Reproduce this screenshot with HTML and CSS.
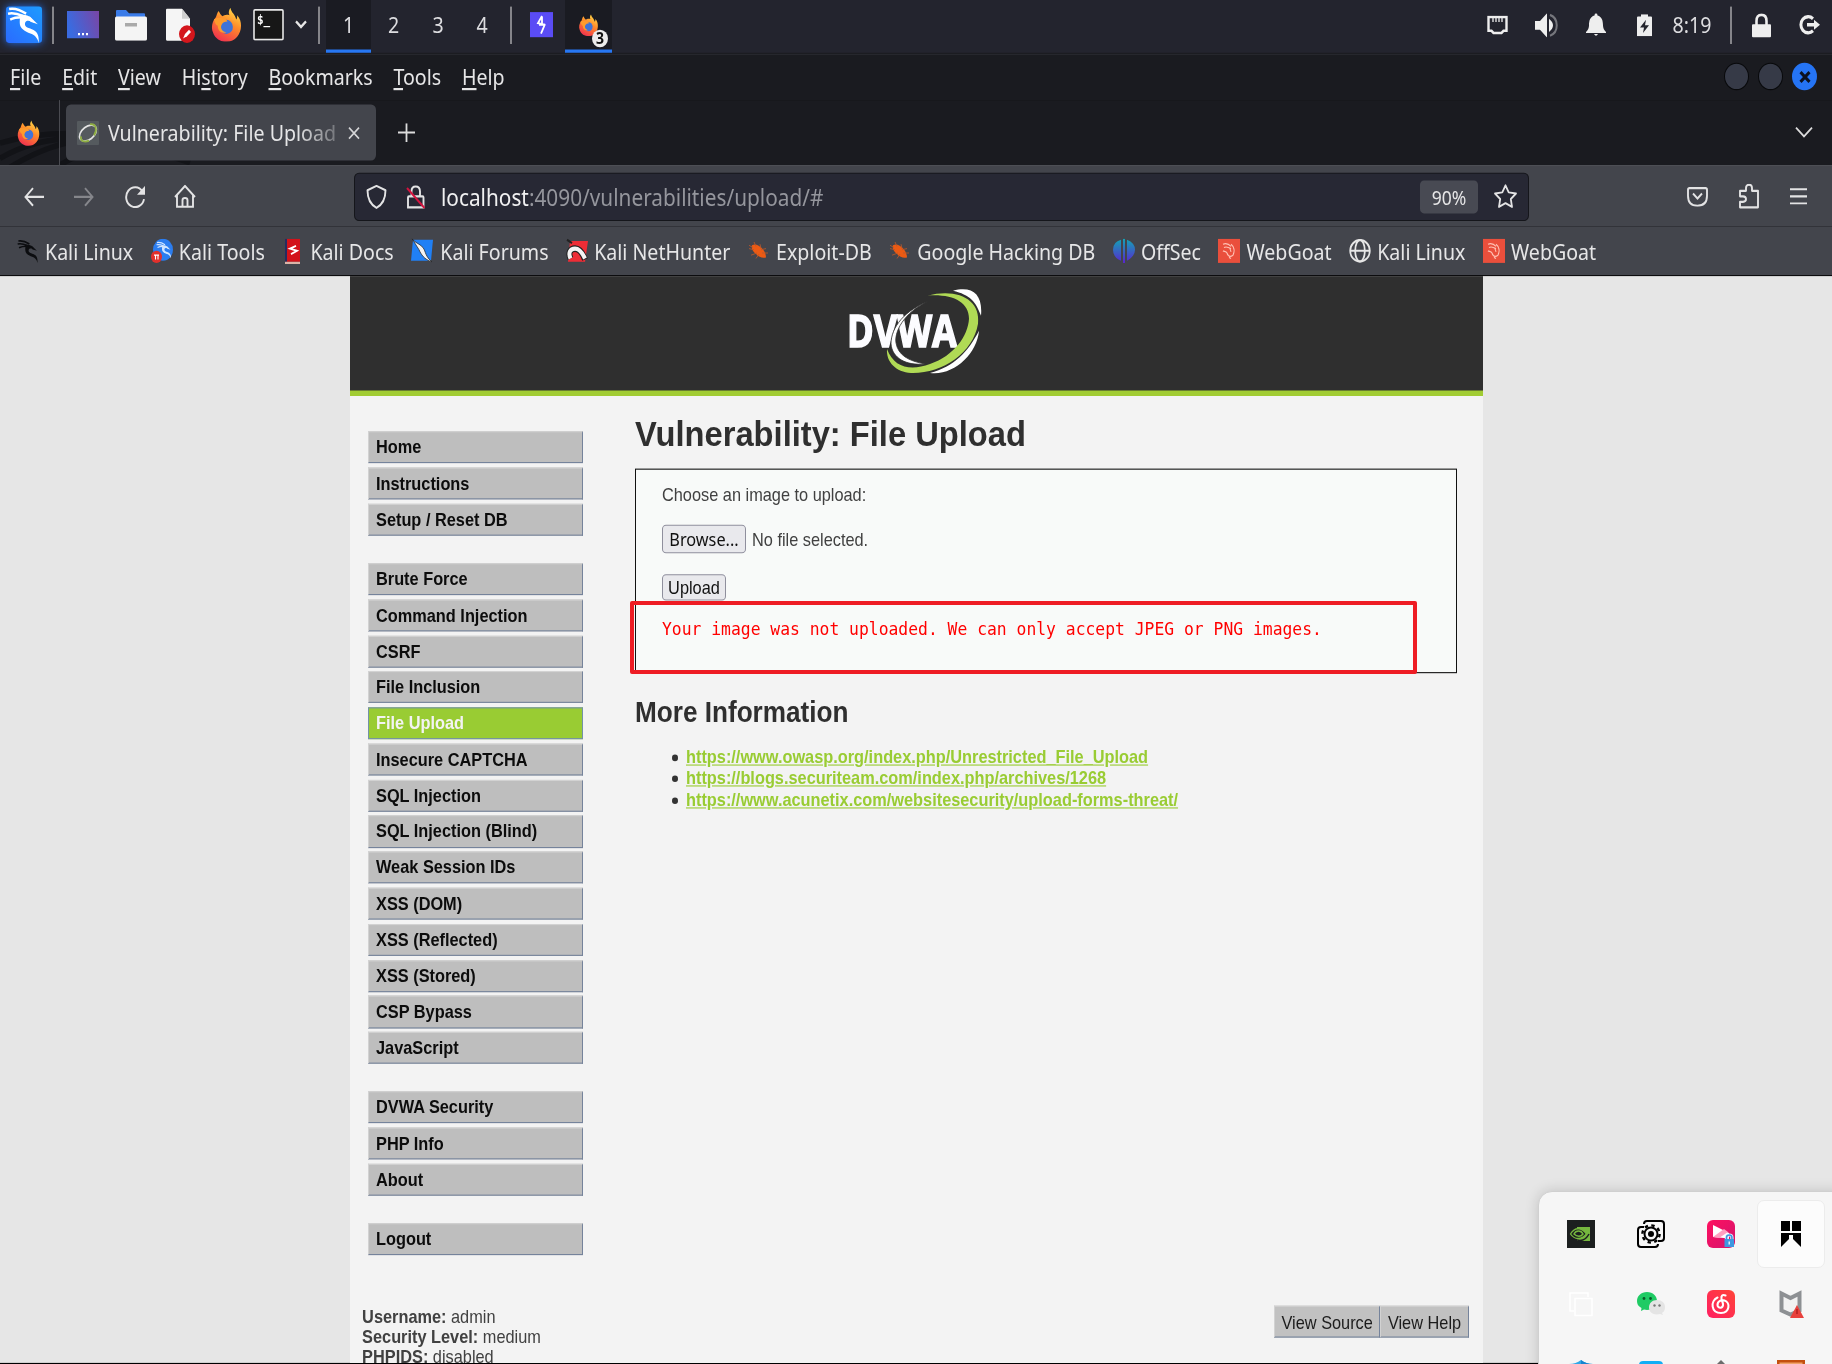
FILE: index.html
```html
<!DOCTYPE html>
<html lang="en">
<head>
<meta charset="utf-8">
<title>Vulnerability: File Upload</title>
<link rel="stylesheet" href="styles.css">
</head>
<body>
<svg class="defs" width="0" height="0" aria-hidden="true">
  <defs>
    <linearGradient id="gFox" x1="0.8" y1="0" x2="0.3" y2="1"><stop offset="0" stop-color="#ffe14a"/><stop offset=".45" stop-color="#ff8a2a"/><stop offset="1" stop-color="#f0304f"/></linearGradient>
    <linearGradient id="gDesk" x1="0" y1="0.3" x2="1" y2="0"><stop offset="0" stop-color="#3a6be0"/><stop offset="1" stop-color="#7a45a5"/></linearGradient>
    <linearGradient id="gKali" x1="1" y1="0" x2="0" y2="1"><stop offset="0" stop-color="#1d9bff"/><stop offset="1" stop-color="#2a6bff"/></linearGradient>
    <linearGradient id="gOff" x1="0" y1="0" x2="0" y2="1"><stop offset="0" stop-color="#12a5b4"/><stop offset="1" stop-color="#5a25cf"/></linearGradient>
    <linearGradient id="gPink" x1="0" y1="0" x2="1" y2="1"><stop offset="0" stop-color="#ff1060"/><stop offset="1" stop-color="#d3156d"/></linearGradient>
    <linearGradient id="gMusic" x1="1" y1="0" x2="0" y2="1"><stop offset="0" stop-color="#ff4438"/><stop offset="1" stop-color="#ff1f62"/></linearGradient>
    <symbol id="fox" viewBox="0 0 32 32">
      <path d="M20 0c-2 3-2 5-1 7-3-1-6 0-7 1-2-1-3-3-4-5-2 2-2 4-3 6C1 13 0 19 2 23c2 6 8 9 14 9 9 0 15-7 15-15 0-4-1-7-4-10 0 2 0 3-1 4-1-5-5-6-6-11z" fill="url(#gFox)"/>
      <circle cx="16" cy="18" r="6.6" fill="#3f73d8"/>
      <path d="M3 11c3-2 6-2 9-1 2 0 4 1 5 3-3 0-5 1-6 3-2 3 1 7 5 7-6 2-9-2-9-6-2-1-3-3-4-6z" fill="#ff9b2c"/>
    </symbol>
    <symbol id="dragon" viewBox="0 0 32 32">
      <path d="M2 3c6-1 11 1 16 4M1 7c5-1 9 0 14 2M3 12c4-2 7-2 11-2" fill="none" stroke="currentColor" stroke-width="2.2"/>
      <path d="M13 8c7-1 11 3 13 7-4-2-8-3-9 0-1 4 4 4 8 6 4 2 5 5 5 11-2-5-4-7-8-8-5-2-10-4-10-9 0-2 0-5 1-7z" fill="currentColor"/>
      <path d="M21 9l8 7-7-2z" fill="currentColor"/>
    </symbol>
    <symbol id="bug" viewBox="0 0 22 22">
      <path d="M4 6c3-2 7 0 9 2 3 2 5 6 5 9-3 1-7 0-10-3C5 12 3 9 4 6z" fill="#ec5a13"/>
      <path d="M1 9l5 1M6 3l2 4M3 15l6-2M8 18l3-4M12 5l1 4M18 9l-5 1M20 13l-6 0M1 6l4 2" stroke="#b9582b" stroke-width=".8" fill="none"/>
    </symbol>
    <symbol id="goat" viewBox="0 0 22 22">
      <rect width="22" height="22" fill="#ea4f3c"/>
      <path d="M5 5c3-1 6 0 8 2M6 8c2-1 5 0 7 1M13 5c3 2 4 6 2 10M5 11c1 1 3 0 4 2M9 13c1 3 3 4 6 2M11 17l2 1M12 9l1 3" fill="none" stroke="#ffc1b4" stroke-width="1.1"/>
    </symbol>
  </defs>
</svg>

<div class="screen">
  <header class="panel">
    <div class="panel-left">
      <div class="cell"><svg class="kali" width="38" height="36" viewBox="0 0 38 36"><rect x="1" y="1" width="36" height="33" rx="3" fill="url(#gKali)"/><svg x="1" y="0" width="36" height="34"><use href="#dragon" color="#fff"/></svg></svg></div>
      <div class="cell"><i class="sep"></i></div>
      <div class="cell"><svg width="32" height="25" viewBox="0 0 32 25"><rect width="32" height="25" fill="url(#gDesk)"/><path d="M11 21h2M15 21h2M19 21h2" stroke="#fff" stroke-width="2"/></svg></div>
      <div class="cell"><svg width="32" height="29" viewBox="0 0 32 29"><path d="M1 9V2q0-1 1-1h9l3 3h15q1 0 1 1v5z" fill="#3a7be8"/><rect y="7" width="32" height="22" rx="1.5" fill="#f4f4f4"/><path d="M10 13h12v3H10z" fill="#a9a9a9"/></svg></div>
      <div class="cell"><svg width="31" height="32" viewBox="0 0 31 32"><path d="M1 2q0-1 1-1h15l8 9v20H2q-1 0-1-1z" fill="#f5f5f5"/><path d="M17 1l8 9h-8z" fill="#cfcfcf"/><circle cx="22" cy="24" r="8" fill="#d4161c"/><path d="M18 28l2-4 4-4 2 2-4 4z" fill="#fff"/></svg></div>
      <div class="cell"><svg width="31" height="31"><use href="#fox"/></svg></div>
      <div class="cell"><svg width="31" height="29" viewBox="0 0 31 29"><rect x="1" y="1" width="29" height="27" rx="1" fill="#171717" stroke="#e8e8e8" stroke-width="1.6"/><text x="4" y="14" class="prompt">$_</text></svg></div>
      <div class="cell"><svg width="12" height="9" viewBox="0 0 12 9"><path d="M1 1.5l5 5 5-5" fill="none" stroke="#e6e6e6" stroke-width="2.2"/></svg></div>
      <div class="cell"><i class="sep"></i></div>
      <div class="cell active">1</div>
      <div class="cell">2</div>
      <div class="cell">3</div>
      <div class="cell">4</div>
      <div class="cell"><i class="sep"></i></div>
      <div class="cell"><svg width="23" height="23" viewBox="0 0 23 23"><rect width="23" height="23" fill="#5a4cf5"/><path d="M12 3.500l-4 6.500 7 1.500-6 0M15 11l-4 8.500M12 4v7" fill="none" stroke="#fff" stroke-width="1.800"/></svg></div>
      <div class="cell active"><svg class="fox-small" width="21" height="20"><use href="#fox"/></svg><span class="badge">3</span></div>
    </div>
    <div class="panel-right">
      <div class="cell"><svg width="21" height="18" viewBox="0 0 21 18"><path d="M1.500 1.500h18v12.500h-3l-2 2h-8l-2-2h-3z" fill="none" stroke="#eee" stroke-width="2.400"/><path d="M6 2v4M9 2v4M12 2v4M15 2v4" stroke="#eee" stroke-width="1.300"/></svg></div>
      <div class="cell"><svg width="25" height="22" viewBox="0 0 25 22"><path d="M0 7h5l7-7v22l-7-7H0z" fill="#eee"/><path d="M14 5q8 6 0 12z" fill="#eee"/><path d="M15 1.500c9 3 9 16 0 19" fill="none" stroke="#75767c" stroke-width="2"/></svg></div>
      <div class="cell"><svg width="20" height="21" viewBox="0 0 20 21"><path d="M10 0q1.500 0 1.500 2C16 3 17 7 17 11q0 4 3 6v1H0v-1q3-2 3-6c0-4 1-8 5.500-9Q8.500 0 10 0zM8 19h4q-2 3-4 0z" fill="#eee"/></svg></div>
      <div class="cell"><svg width="15" height="20" viewBox="0 0 15 20"><path d="M4 0h7v2h3q1 0 1 1v17H0V3q0-1 1-1h3z" fill="#eee"/><path d="M9 5l-6 7h4l-1 5 6-7H8z" fill="#23242d"/></svg></div>
      <div class="cell">8:19</div>
      <div class="cell"><i class="sep"></i></div>
      <div class="cell"><svg width="19" height="22" viewBox="0 0 19 22"><rect y="10" width="19" height="12" rx="1" fill="#eee"/><path d="M4.500 11V7q0-5.500 5-5.500t5 5.500v4" fill="none" stroke="#eee" stroke-width="2.600"/></svg></div>
      <div class="cell"><svg width="21" height="19" viewBox="0 0 21 19"><path d="M14 4A7.300 7.300 0 1 0 14 15" fill="none" stroke="#eee" stroke-width="3"/><path d="M8 8h7V5l6 4.500-6 4.500v-3H8z" fill="#eee"/></svg></div>
    </div>
  </header>

  <div class="titlebar">
    <nav class="menus">
      <span><u>F</u>ile</span><span><u>E</u>dit</span><span><u>V</u>iew</span><span>Hi<u>s</u>tory</span><span><u>B</u>ookmarks</span><span><u>T</u>ools</span><span><u>H</u>elp</span>
    </nav>
    <div class="window-buttons"><i></i><i></i><b><svg width="12" height="12" viewBox="0 0 12 12"><path d="M1.500 1.500l9 9M10.500 1.500l-9 9" stroke="#0c1220" stroke-width="3"/></svg></b></div>
  </div>

  <div class="tabs">
    <svg class="swirl" width="210" height="48" viewBox="0 0 210 48"><path d="M0 28Q60 12 140 26M0 42Q60 10 150 34M10 50Q60 22 110 24M60 48Q110 20 190 46" fill="none" stroke="#121317" stroke-width="5"/></svg>
    <div class="tab-home"><svg width="23" height="24"><use href="#fox"/></svg></div>
    <div class="tab">
      <svg width="22" height="22" viewBox="0 0 22 22"><rect width="22" height="22" rx="1" fill="#555a5e"/><ellipse cx="11" cy="11" rx="9.500" ry="6" transform="rotate(-35 11 11)" fill="none" stroke="#e4e4e4" stroke-width="1.600"/><path d="M13 3c7-1 7 6 4 10M4 14c-1 5 4 5 8 4" fill="none" stroke="#8fae43" stroke-width="1.800"/></svg>
      <span class="tab-title">Vulnerability: File Upload</span>
      <svg width="12" height="12" viewBox="0 0 12 12"><path d="M1 1l10 10M11 1L1 11" stroke="#d5d5d7" stroke-width="1.600"/></svg>
    </div>
    <svg class="plus" width="17" height="17" viewBox="0 0 17 17"><path d="M8.500 0v17M0 8.500h17" stroke="#dcdcdc" stroke-width="1.800"/></svg>
    <svg class="tab-list" width="18" height="11" viewBox="0 0 18 11"><path d="M1 1l8 8 8-8" fill="none" stroke="#dcdcdc" stroke-width="1.800"/></svg>
  </div>

  <div class="toolbar">
    <div class="nav-buttons">
      <svg width="20" height="18" viewBox="0 0 20 18"><path d="M20 9H1.500M9 1L1.500 9 9 17" fill="none" stroke="#e3e3e4" stroke-width="1.900"/></svg>
      <svg width="20" height="18" viewBox="0 0 20 18"><path d="M0 9h18.500M11 1l7.500 8L11 17" fill="none" stroke="#85868b" stroke-width="1.900"/></svg>
      <svg width="22" height="20" viewBox="0 0 22 20"><path d="M18.500 5A9 9 0 1 0 20 12" fill="none" stroke="#e3e3e4" stroke-width="1.900"/><path d="M21 0v8h-8z" fill="#e3e3e4"/></svg>
      <svg width="22" height="21" viewBox="0 0 22 21"><path d="M1 11l10-10 10 10M3 9.500V20h16V9.500M8.500 20v-6q0-2 2.500-2t2.500 2v6" fill="none" stroke="#e3e3e4" stroke-width="1.900"/></svg>
    </div>
    <div class="urlbar">
      <svg class="shield" width="21" height="22" viewBox="0 0 21 22"><path d="M10.500 1l9 4c0 8-3 13-9 16-6-3-9-8-9-16z" fill="none" stroke="#e3e3e4" stroke-width="1.900" stroke-linejoin="round"/></svg>
      <svg class="lock" width="20" height="22" viewBox="0 0 20 22"><path d="M2 20.500v-9q0-1 1-1h13.500q1 0 1 1v9zM5.500 10V6q0-4.500 4.200-4.500T14 6v4" fill="none" stroke="#e3e3e4" stroke-width="1.900"/><path d="M1 3l17.500 18" stroke="#d3143f" stroke-width="2"/></svg>
      <span class="url"><b>localhost</b>:4090/vulnerabilities/upload/#</span>
      <span class="zoom-level">90%</span>
      <svg width="25" height="23" viewBox="0 0 25 23"><path d="M12.500 1.500l3.200 6.400 7.300 1-5.200 5 1.200 7.200-6.500-3.400L6 21.100l1.200-7.200L2 8.900l7.300-1z" fill="none" stroke="#e3e3e4" stroke-width="1.800" stroke-linejoin="round"/></svg>
    </div>
    <div class="tool-buttons">
      <svg width="21" height="18" viewBox="0 0 21 18"><path d="M2.500 1h16q1.500 0 1.500 1.500V8q0 9-9.500 9T1 8V2.500Q1 1 2.500 1z" fill="none" stroke="#e3e3e4" stroke-width="1.900"/><path d="M6 6l4.500 4.500L15 6" fill="none" stroke="#e3e3e4" stroke-width="1.900"/></svg>
      <svg width="20" height="23" viewBox="0 0 20 23"><path d="M1 6.500h6V4q0-3 3-3t3 3v2.500h6V21.500H1v-5h3q3 0 3-2.500T4 11.500H1z" fill="none" stroke="#e3e3e4" stroke-width="1.900" stroke-linejoin="round"/></svg>
      <svg width="17" height="15" viewBox="0 0 17 15"><path d="M0 1h17M0 7.500h17M0 14h17" stroke="#e3e3e4" stroke-width="1.900"/></svg>
    </div>
  </div>

  <nav class="bookmarks">
    <span><svg width="22" height="24"><use href="#dragon" color="#0c0d10"/></svg>Kali Linux</span>
    <span><svg width="22" height="22" viewBox="0 0 22 22"><circle cx="12" cy="10" r="10" fill="#2b7df0"/><svg x="5" y="2" width="16" height="16"><use href="#dragon" color="#cfe4ff"/></svg><circle cx="5.500" cy="16.500" r="5.500" fill="#e1302c"/><path d="M3 15h5M4.500 15v4M7 15v4" stroke="#fff" stroke-width="1.100"/></svg>Kali Tools</span>
    <span><svg width="22" height="23" viewBox="0 0 22 23"><path d="M3 0h15v21H3z" fill="#d3121a"/><path d="M3 0h2v21H3z" fill="#262c60"/><path d="M3 21h15v2H3z" fill="#d9b4a8"/><path d="M14 6.500l-6 2.500 7 2-6 3" fill="none" stroke="#fff" stroke-width="1.700"/></svg>Kali Docs</span>
    <span><svg width="23" height="22" viewBox="0 0 23 22"><path d="M2 1h20l-2 19H0z" fill="#2080f5"/><path d="M1 0c3 4 7 4 11 8 3 4 2 8 9 13-8-2-11-7-13-11z" fill="#f3f3f3" stroke="#222" stroke-width=".7"/></svg>Kali Forums</span>
    <span><svg width="22" height="22" viewBox="0 0 22 22"><path d="M4 2h18l-3 19H2z" fill="#ee2d36"/><path d="M4.500 18C2 13 4 9 9 9s8 5 10 10" fill="none" stroke="#222" stroke-width="6"/><path d="M4.500 18C2 13 4 9 9 9s8 5 10 9" fill="none" stroke="#f4f4f4" stroke-width="4"/><path d="M1 1l5 3" stroke="#222" stroke-width="2"/></svg>Kali NetHunter</span>
    <span><svg width="22" height="22"><use href="#bug"/></svg>Exploit-DB</span>
    <span><svg width="22" height="22"><use href="#bug"/></svg>Google Hacking DB</span>
    <span><svg width="22" height="22" viewBox="0 0 22 22"><path d="M8 1v19Q0 17 0 10T8 1zM10 0h2v22h-2zM14 1q8 3 8 9t-8 10z" fill="url(#gOff)"/></svg>OffSec</span>
    <span><svg width="22" height="22"><use href="#goat"/></svg>WebGoat</span>
    <span><svg width="22" height="22" viewBox="0 0 22 22"><g fill="none" stroke="#e6e6e6" stroke-width="1.800"><circle cx="11" cy="11" r="9.800"/><ellipse cx="11" cy="11" rx="4.800" ry="9.800"/><path d="M1 11h20"/></g></svg>Kali Linux</span>
    <span><svg width="22" height="22"><use href="#goat"/></svg>WebGoat</span>
  </nav>

  <main class="page">
    <div class="container">
      <header class="site-header">
        <svg width="140" height="84" viewBox="0 0 140 92" preserveAspectRatio="none">
          <text x="1" y="65" class="logo-text" textLength="110" lengthAdjust="spacingAndGlyphs">DVWA</text>
          <path d="M86 18C62 27 48 47 50 61C52 73 62 79 79 82C60 84 46 76 45 62C45 46 58 28 86 18z" fill="#fff" stroke="#2f2f2f" stroke-width=".8"/>
          <path d="M81 14C112 6 135 18 132 42C127 72 95 92 65 91C50 90 40 80 41 67C48 86 65 89 84 82C108 74 122 54 123 37C123 20 106 12 81 14z" fill="#b0da55"/>
          <path d="M107 9C126 4 137 12 135 34C130 20 124 13 107 9zM133 49C131 72 108 94 84 91C108 85 122 70 133 49z" fill="#fff"/>
        </svg>
      </header>
      <div class="site-body">
        <nav class="side">
          <ul><li>Home</li><li>Instructions</li><li>Setup / Reset DB</li></ul>
          <ul><li>Brute Force</li><li>Command Injection</li><li>CSRF</li><li>File Inclusion</li><li class="selected">File Upload</li><li>Insecure CAPTCHA</li><li>SQL Injection</li><li>SQL Injection (Blind)</li><li>Weak Session IDs</li><li>XSS (DOM)</li><li>XSS (Reflected)</li><li>XSS (Stored)</li><li>CSP Bypass</li><li>JavaScript</li></ul>
          <ul><li>DVWA Security</li><li>PHP Info</li><li>About</li></ul>
          <ul><li>Logout</li></ul>
        </nav>
        <section class="content">
          <h1>Vulnerability: File Upload</h1>
          <div class="form-box">
            <p class="label">Choose an image to upload:</p>
            <div class="file-row"><span class="button browse">Browse...</span><span>No file selected.</span></div>
            <span class="button upload">Upload</span>
            <pre>Your image was not uploaded. We can only accept JPEG or PNG images.</pre>
          </div>
          <h2>More Information</h2>
          <ul class="links">
            <li><a>https://www.owasp.org/index.php/Unrestricted_File_Upload</a></li>
            <li><a>https://blogs.securiteam.com/index.php/archives/1268</a></li>
            <li><a>https://www.acunetix.com/websitesecurity/upload-forms-threat/</a></li>
          </ul>
        </section>
      </div>
      <footer class="site-footer">
        <div><b>Username:</b> admin<br><b>Security Level:</b> medium<br><b>PHPIDS:</b> disabled</div>
        <div class="footer-buttons"><span>View Source</span><span>View Help</span></div>
      </footer>
    </div>
  </main>
</div>

<div class="highlight"></div>

<aside class="tray">
  <div><svg width="28" height="28" viewBox="0 0 28 28"><rect width="28" height="28" fill="#1c1f1f"/><path d="M10 7h13v14H10z" fill="#76b83f"/><path d="M3.500 14c4-7 11-7 16 0-5 6-12 6-16 0z" fill="#1c1f1f" stroke="#76b83f" stroke-width="1.300"/><path d="M7 14c2-4 7-4 9 0-2 3-6 3-9 0z" fill="none" stroke="#76b83f" stroke-width="1.500"/><path d="M10 20q8 2 12-6" fill="none" stroke="#1c1f1f" stroke-width="1.500"/></svg></div>
  <div><svg width="28" height="28" viewBox="0 0 28 28"><g fill="none" stroke="#000" stroke-width="2"><path d="M7 4q0-3 3-3h14q3 0 3 3v14q0 3-3 3h-3"/><path d="M7 7H4q-3 0-3 3v14q0 3 3 3h14q3 0 3-3"/><circle cx="14" cy="14" r="6.500" stroke-width="2"/><circle cx="14" cy="14" r="8.600" stroke-dasharray="3.380 3.380" stroke-width="2.400"/></g><circle cx="14" cy="14" r="3" fill="#000"/></svg></div>
  <div><svg width="28" height="28" viewBox="0 0 28 28"><rect width="28" height="28" rx="6" fill="url(#gPink)"/><path d="M6 5l16 8v6l-5-1-11-1z" fill="#fff"/><path d="M6 17l11-8 4 3-9 6z" fill="#ff9fc0"/><path d="M17.500 19h9.500v8h-9.500z" fill="#3e97e0"/><path d="M19.500 19v-1.500q0-2.500 2.700-2.500t2.700 2.500V19" fill="none" stroke="#e9f4ff" stroke-width="3.200"/><path d="M19.500 19.500v-2q0-2.500 2.700-2.500t2.700 2.500v2" fill="none" stroke="#3e97e0" stroke-width="1.600"/><path d="M22.200 21.500v3" stroke="#fff" stroke-width="1.300"/></svg></div>
  <div class="picked"><svg width="20" height="26" viewBox="0 0 20 26"><path d="M0 0h9v10H0zM11 0h9v10h-9zM0 12h20v14l-8-8V14h-4v4l-8 8z"/></svg></div>
  <div><svg width="28" height="28" viewBox="0 0 28 28"><path d="M21 7V3H3v18h4M8 8.500h17v17H8z" fill="none" stroke="#fff" stroke-width="1.500"/></svg></div>
  <div><svg width="28" height="28" viewBox="0 0 28 28"><path d="M10 2c6 0 10 4 10 9s-4 9-10 9l-3-.5L4 21l.5-3C1 16 0 14 0 11c0-5 4-9 10-9z" fill="#1fcb64"/><circle cx="7" cy="8.500" r="1.400" fill="#0b5a2a"/><circle cx="13.500" cy="8.500" r="1.400" fill="#0b5a2a"/><path d="M20 10c5 0 8 3 8 7 0 3-1 5-3 6l1 2-3-1-3 .500c-5 0-8-3-8-7s3-7.500 8-7.500z" fill="#e4e4e4"/><circle cx="17.500" cy="15.500" r="1.200" fill="#777"/><circle cx="22.500" cy="15.500" r="1.200" fill="#777"/></svg></div>
  <div><svg width="28" height="28" viewBox="0 0 28 28"><rect width="28" height="28" rx="6" fill="url(#gMusic)"/><path d="M18.500 5.500c-3-1.500-4.500.5-4 3l1.500 5.500c.5 5-5.500 4.500-5.500 1 0-4 4-5.500 7-4.500 6 2 5.500 12-3.500 12.500C4 23 3 11 10.500 7.500" fill="none" stroke="#fff" stroke-width="2.100" stroke-linecap="round"/></svg></div>
  <div><svg width="28" height="28" viewBox="0 0 28 28"><path d="M3.500 3l10 5 10-5v18l-10 5-10-5z" fill="#f2f2f2"/><path d="M4.500 3.500l9 4.500 9-4.500v17l-9 4-9-4z" fill="none" stroke="#8d9093" stroke-width="4"/><path d="M20 15l7 13H13z" fill="#e8413c"/><path d="M20 19v5" stroke="#b3201f" stroke-width="1.500"/></svg></div>
  <div><svg width="28" height="28" viewBox="0 0 28 28"><path d="M2 4q7 0 12-4 5 4 12 4v10H2z" fill="#2fa8e8"/><path d="M14 0q5 4 12 4v10H14z" fill="#1784cf"/></svg></div>
  <div><svg width="28" height="28" viewBox="0 0 28 28"><rect x="2" y="1" width="24" height="24" rx="4" fill="#12aef5"/></svg></div>
  <div><svg width="28" height="28" viewBox="0 0 28 28"><path d="M14 0l7 7H7z" fill="#6c6c6c"/></svg></div>
  <div><svg width="28" height="28" viewBox="0 0 28 28"><rect x="1" y="1" width="26" height="24" fill="#f0a46a" stroke="#c4500f" stroke-width="3"/></svg></div>
</aside>
</body>
</html>
```
FILE: styles.css
```css
* { box-sizing: border-box; }
html, body { margin: 0; height: 1364px; overflow: hidden; }
body { font-family: "Noto Sans", sans-serif; background: #000; position: relative; }
svg { display: block; flex: none; }
.defs { position: absolute; }
ul, p, h1, h2, pre { margin: 0; padding: 0; list-style: none; }

/* The guest display is stretched vertically to fill the window. */
.screen {
  width: 1832px;
  height: 1240px;
  transform: scaleY(1.1);
  transform-origin: 0 0;
  display: flex;
  flex-direction: column;
  background: #000;
  color: #e6e6e7;
  font-size: 19.6px;
  overflow: hidden;
}

/* desktop panel */
.panel {
  height: 49px;
  flex: none;
  display: flex;
  justify-content: space-between;
  background: #23242e;
  border-bottom: 1px solid #1b1c22;
  color: #dddde0;
}
.panel-left, .panel-right { display: grid; height: 48px; }
.panel-left { grid-template-columns: 47px 12px 47px 49px 51px 41px 43px 22px 14px 45px 45px 44px 44px 14px 47px 47px; }
.panel-right { grid-template-columns: 70px 30px 68px 28px 68px 10px 50px 46px; }
.cell { display: flex; align-items: center; justify-content: center; padding: 2px 0 5px; height: 48px; position: relative; }
.cell.active { background: #1a1b22; box-shadow: inset 0 -3px #2777f2; }
.sep { width: 2px; height: 34px; background: #85858a; }
.kali { filter: drop-shadow(0 0 4px #2570f0); }
.prompt { font: bold 11px "DejaVu Sans Mono", monospace; fill: #fff; }
.badge {
  position: absolute;
  left: 27px;
  top: 27px;
  width: 16px;
  height: 16px;
  border-radius: 50%;
  background: #ececec;
  color: #111;
  font: bold 14px/16px "Noto Sans", sans-serif;
  text-align: center;
}

/* window title, menus and tabs */
.titlebar {
  height: 42px;
  flex: none;
  display: flex;
  justify-content: space-between;
  align-items: center;
  padding: 0 15px 2px 10px;
  background: #1a1b20;
  border-top: 1px solid #26272d;
}
.menus { display: flex; gap: 20.800px; }
.menus u { text-underline-offset: 3px; text-decoration-thickness: 1.5px; }
.window-buttons { display: flex; gap: 9px; }
.window-buttons i, .window-buttons b { width: 25px; height: 25px; border-radius: 50%; }
.window-buttons i { background: #363a47; border: 1px solid #08090b; }
.window-buttons b { background: #2574f4; display: grid; place-items: center; }
.tabs {
  height: 59px;
  flex: none;
  display: flex;
  align-items: center;
  background: #1a1b20;
  position: relative;
}
.swirl { position: absolute; left: 0; bottom: 0; }
.tab-home {
  position: relative;
  width: 60px;
  height: 59px;
  padding: 0 0 0 17px;
  display: flex;
  align-items: center;
  border-right: 1px solid #4a4b51;
}
.tab {
  position: relative;
  width: 310px;
  height: 50.500px;
  margin-left: 6px;
  border-radius: 5px;
  background: #43454c;
  display: flex;
  align-items: center;
  padding: 0 16px 0 11px;
}
.tab-title {
  flex: 1;
  margin: 0 10px 0 9px;
  white-space: nowrap;
  mask-image: linear-gradient(90deg, #000 82%, rgba(0, 0, 0, .35) 98%);
}
.plus { margin-left: 22px; }
.tab-list { margin-left: auto; margin-right: 19px; }

/* navigation toolbar */
.toolbar {
  height: 56px;
  flex: none;
  display: flex;
  align-items: center;
  background: #43454c;
  border-top: 1px solid #4d4f55;
}
.nav-buttons { display: flex; align-items: center; gap: 30px; width: 354px; padding-left: 24px; }
.nav-buttons svg:last-child { margin-left: -2px; }
.urlbar {
  width: 1175px;
  height: 44px;
  border: 1px solid #15161b;
  border-radius: 5px;
  background: #272834;
  display: flex;
  align-items: center;
  padding: 0 10px 0 11px;
}
.lock { margin: 0 15px 0 19px; }
.url { color: #95969d; flex: 1; font-size: 20.800px; line-height: 28px; }
.url b { font-weight: 400; color: #f0f0f1; }
.zoom-level {
  width: 58px;
  height: 30px;
  margin-right: 15px;
  border-radius: 4px;
  background: #484a53;
  font-size: 17.500px;
  line-height: 30px;
  text-align: center;
}
.tool-buttons { display: flex; align-items: center; margin-left: 158px; gap: 31px; }
.bookmarks {
  height: 45px;
  flex: none;
  display: flex;
  gap: 17.600px;
  padding-left: 17px;
  background: #43454c;
  border-bottom: 1.500px solid #0c0c0e;
  white-space: nowrap;
}
.bookmarks span { display: flex; align-items: center; gap: 6px; }

/* web page */
.page { height: 987.500px; flex: none; background: #e6e6e6; overflow: hidden; }
.container {
  width: 1133px;
  height: 990px;
  margin-left: 349.600px;
  background: #f3f3f3;
  color: #414141;
  font: 16.340px/18.200px "Liberation Sans", Arial, sans-serif;
}
.site-header {
  height: 108.500px;
  background: #2f2f2f;
  border-bottom: 5px solid #a1cc33;
  display: flex;
  justify-content: center;
  padding-top: 5px;
}
.logo-text { font: bold 45px "Open Sans", sans-serif; fill: #fcfcff; stroke: #fcfcff; stroke-width: 1.6; }
.site-body { display: flex; height: 828.500px; }
.side { width: 285.400px; padding: 32.700px 52px 0 18.400px; color: #0c0c0c; font-weight: 700; }
.side ul { margin-bottom: 25.000px; }
.side li {
  width: 215px;
  height: 29.200px;
  margin-bottom: 3.600px;
  padding-left: 7px;
  line-height: 27px;
  background: #bebebe;
  border: 1px solid;
  border-color: #d2d2d2 #75839b #75839b #d2d2d2;
}
.side .selected { background: #9c3; color: #f3f3f3; border-color: #7391a8; }
.content { width: 822px; padding-top: 15.500px; }
h1, h2 { color: #2f2f2f; font-weight: 700; }
h1 { font-size: 32.680px; line-height: 38px; }
h2 { font-size: 26.150px; line-height: 30px; margin-top: 20.200px; }
.form-box {
  height: 186.400px;
  margin-top: 12.700px;
  padding: 13.700px 26px 0;
  border: 1px solid #111;
  background: #f8faf9;
  display: flex;
  flex-direction: column;
  align-items: flex-start;
}
.label { height: 18px; }
.file-row { display: flex; align-items: center; gap: 6px; margin-top: 18.800px; }
.button { border: 1px solid #8f8f9d; border-radius: 4px; background: #e9e9ed; color: #111; text-align: center; }
.browse { width: 84px; height: 26.300px; font: 16.300px/24px "Noto Sans", sans-serif; }
.upload { width: 64px; height: 24.600px; margin-top: 18.200px; line-height: 23px; }
pre { margin-top: 15.800px; font: 16.360px/19px "DejaVu Sans Mono", monospace; color: #f00; }
.links { margin-top: 16.300px; padding-left: 51px; font-weight: 700; line-height: 19.700px; }
.links li { position: relative; }
.links li::before {
  content: "";
  position: absolute;
  left: -14px;
  top: 7px;
  width: 6px;
  height: 6px;
  border-radius: 50%;
  background: #333;
}
.links a { color: #9c3; text-decoration: underline; }
.site-footer { display: flex; justify-content: space-between; padding: 0 14px 0 12.500px; }
.footer-buttons { display: flex; height: 29px; margin-top: -1px; color: #1c1c1c; }
.footer-buttons span {
  padding: 0 6.500px;
  line-height: 28px;
  background: #c1c1c1;
  border: 1px solid;
  border-color: #d2d2d2 #75839b #75839b #d2d2d2;
}

/* marker drawn over the message */
.highlight {
  position: absolute;
  left: 630px;
  top: 601px;
  width: 787px;
  height: 73px;
  border: 4px solid #ee1c24;
  border-radius: 2px;
}

/* host notification overflow */
.tray {
  position: absolute;
  left: 1538px;
  top: 1191px;
  width: 310px;
  height: 230px;
  padding: 8px 0 0 8px;
  border: 1px solid #d0d0d0;
  border-radius: 14px;
  background: #f6f6f6;
  box-shadow: 0 0 14px rgba(0, 0, 0, .16);
  display: grid;
  grid-template-columns: repeat(4, 68px);
  grid-auto-rows: 68px;
  gap: 2px;
}
.tray div { display: grid; place-items: center; }
.tray .picked { background: #fcfcfc; border: 1px solid #ececec; border-radius: 7px; }
```
